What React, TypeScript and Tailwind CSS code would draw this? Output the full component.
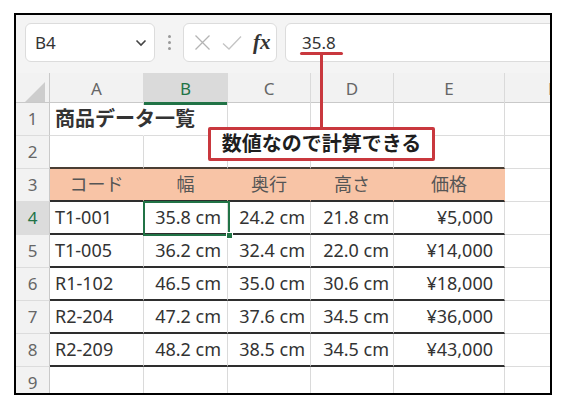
import React from 'react'

const FONT = "font-['Noto_Sans','Noto_Sans_CJK_JP',sans-serif]"

const cols = ['A', 'B', 'C', 'D', 'E', 'F']

const rows = [
  ['T1-001', '35.8 cm', '24.2 cm', '21.8 cm', '¥5,000'],
  ['T1-005', '36.2 cm', '32.4 cm', '22.0 cm', '¥14,000'],
  ['R1-102', '46.5 cm', '35.0 cm', '30.6 cm', '¥18,000'],
  ['R2-204', '47.2 cm', '37.6 cm', '34.5 cm', '¥36,000'],
  ['R2-209', '48.2 cm', '38.5 cm', '34.5 cm', '¥43,000'],
]

const GRID = 'grid grid-cols-[34px_94px_84px_83px_83px_111px_96px]'

function RowHead({ n, active }: { n: number; active?: boolean }) {
  return (
    <div
      className={`h-[33px] flex items-center justify-center text-[17px] border-r border-r-[#c9c9c9] border-b border-b-[#dcdcdc] ${
        active ? 'bg-[#dcdcdc] text-[#217346]' : 'bg-[#f2f2f2] text-[#666]'
      }`}
    >
      {n}
    </div>
  )
}

function Cell({ children, className = '' }: { children?: React.ReactNode; className?: string }) {
  return (
    <div className={`h-[33px] flex items-center text-[18px] text-[#333] whitespace-nowrap border-r border-r-[#dadada] ${className}`}>
      {children}
    </div>
  )
}

export default function App() {
  return (
    <div className={`relative w-[564px] h-[415px] bg-white pt-[13px] pl-[14px] ${FONT}`}>
      <div className="w-[538px] h-[382px] border-2 border-black overflow-hidden bg-white">
        {/* toolbar */}
        <div className="h-[58px] bg-[#f4f4f4] flex items-start pt-[8px] pl-[9px]">
          <div className="shrink-0 w-[130px] h-[39px] bg-white border border-[#dcdcdc] rounded-[6px] flex items-center justify-between pl-[9px] pr-[7px]">
            <span className="text-[17px] text-[#333]">B4</span>
            <svg width="12" height="8" viewBox="0 0 12 8" fill="none">
              <path d="M1.5 1.5 L6 6 L10.5 1.5" stroke="#444" strokeWidth="1.6" />
            </svg>
          </div>
          <div className="shrink-0 w-[28px] h-[39px] flex flex-col items-center justify-center gap-[3px]">
            <span className="w-[3px] h-[3px] rounded-full bg-[#999]" />
            <span className="w-[3px] h-[3px] rounded-full bg-[#999]" />
            <span className="w-[3px] h-[3px] rounded-full bg-[#999]" />
          </div>
          <div className="shrink-0 w-[94px] h-[39px] bg-white border border-[#dcdcdc] rounded-[6px] flex items-center pl-[10px] gap-[11px]">
            <svg width="17" height="17" viewBox="0 0 17 17" fill="none">
              <path d="M1.5 1.5 L15.5 15.5 M15.5 1.5 L1.5 15.5" stroke="#b4b4b4" strokeWidth="1.3" />
            </svg>
            <svg width="20" height="16" viewBox="0 0 20 16" fill="none">
              <path d="M1 8.5 L7 14 L19 1.5" stroke="#c4c4c4" strokeWidth="1.3" />
            </svg>
            <span className="font-['Liberation_Serif',serif] italic font-bold text-[21px] text-[#333] leading-none">fx</span>
          </div>
          <div className="shrink-0 ml-[8px] w-[320px] h-[39px] bg-white border border-[#dcdcdc] rounded-[6px] flex items-center pl-[16px]">
            <span className="text-[17px] text-[#333]">35.8</span>
          </div>
        </div>

        {/* column header */}
        <div className={`${GRID} h-[30px] bg-[#f2f2f2] border-b border-b-[#c9c9c9]`}>
          <div className="relative border-r border-r-[#c9c9c9]">
            <div className="absolute right-[4px] bottom-[3px] w-0 h-0 border-l-[20px] border-l-transparent border-b-[20px] border-b-[#cdcdcd]" />
          </div>
          {cols.map((c) => (
            <div
              key={c}
              className={`flex items-center justify-center text-[17px] border-r border-r-[#dadada] ${
                c === 'B' ? 'bg-[#dadada] text-[#217346] border-b-[3px] border-b-[#217346] pt-[3px]' : 'text-[#666]'
              }`}
            >
              {c}
            </div>
          ))}
        </div>

        {/* row 1 */}
        <div className={GRID}>
          <RowHead n={1} />
          <Cell className="pl-[5px] border-b border-b-[#dcdcdc] border-r-transparent font-bold text-[20px] text-[#222] overflow-visible">
            商品データ一覧
          </Cell>
          {[0, 1, 2, 3, 4].map((i) => (
            <Cell key={i} className="border-b border-b-[#dcdcdc]" />
          ))}
        </div>

        {/* row 2 */}
        <div className={GRID}>
          <RowHead n={2} />
          {[0, 1, 2, 3, 4].map((i) => (
            <Cell key={i} className="border-b-2 border-b-[#4a3e34]" />
          ))}
          <Cell className="border-b border-b-[#dcdcdc]" />
        </div>

        {/* row 3 header */}
        <div className={GRID}>
          <RowHead n={3} />
          {['コード', '幅', '奥行', '高さ', '価格'].map((h) => (
            <Cell key={h} className="justify-center bg-[#f8c4a6] text-[17px] text-[#555] border-r-transparent border-b-2 border-b-[#2e2e2e]">
              {h}
            </Cell>
          ))}
          <Cell className="border-b border-b-[#dcdcdc]" />
        </div>

        {/* data */}
        {rows.map((r, ri) => (
          <div key={ri} className={GRID}>
            <RowHead n={ri + 4} active={ri === 0} />
            <Cell className="pl-[5px] border-b-2 border-b-[#2e2e2e]">{r[0]}</Cell>
            <Cell className="justify-end pr-[6px] border-b-2 border-b-[#2e2e2e]">{r[1]}</Cell>
            <Cell className="justify-end pr-[5px] border-b-2 border-b-[#2e2e2e]">{r[2]}</Cell>
            <Cell className="justify-end pr-[4px] border-b-2 border-b-[#2e2e2e]">{r[3]}</Cell>
            <Cell className="justify-end pr-[11px] border-b-2 border-b-[#2e2e2e]">{r[4]}</Cell>
            <Cell className="border-b border-b-[#dcdcdc]" />
          </div>
        ))}

        {/* row 9 */}
        <div className={GRID}>
          <RowHead n={9} />
          {[0, 1, 2, 3, 4, 5].map((i) => (
            <Cell key={i} className="border-b border-b-[#dcdcdc]" />
          ))}
        </div>
      </div>

      {/* selected cell B4 */}
      <div className="absolute left-[143px] top-[201px] w-[87px] h-[35px] border-2 border-[#217346] pointer-events-none" />
      <div className="absolute left-[226px] top-[232px] w-[7px] h-[7px] bg-[#217346] border border-white" />

      {/* callout */}
      <div className="absolute left-[300px] top-[52px] w-[43px] h-[3px] rounded-full bg-[#c9383e]" />
      <div className="absolute left-[320px] top-[53px] w-[3px] h-[76px] bg-[#c9383e]" />
      <div className="absolute left-[208px] top-[127px] w-[227px] h-[34px] bg-white border-[3px] border-[#c9383e] rounded-[2px] flex items-center justify-center">
        <span className="font-bold text-[20px] text-[#1e1e1e] leading-none">数値なので計算できる</span>
      </div>
    </div>
  )
}
